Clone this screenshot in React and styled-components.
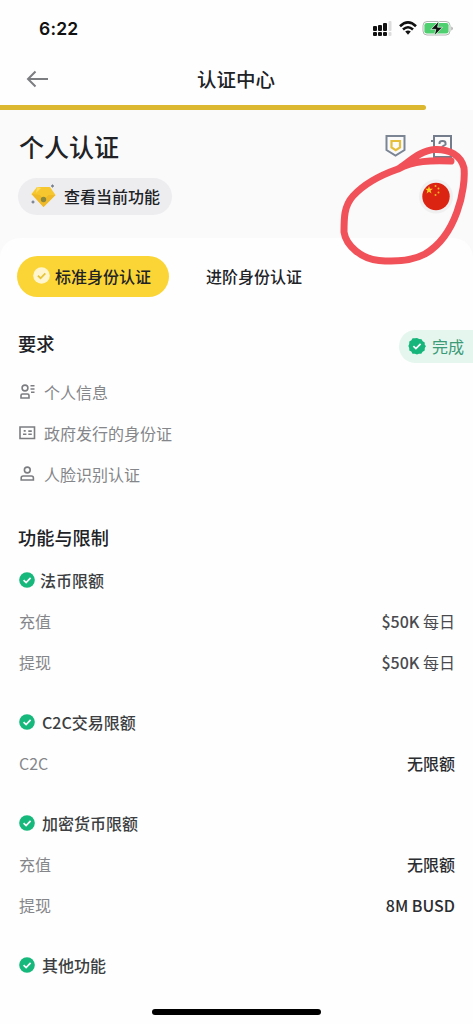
import React from "react";
import styled, { createGlobalStyle } from "styled-components";

const GlobalStyle = createGlobalStyle`
  * {
    box-sizing: border-box;
  }
  body {
    margin: 0;
    background: #fefefe;
  }
`;

const Page = styled.div`
  position: relative;
  display: flex;
  flex-direction: column;
  width: 473px;
  height: 1024px;
  overflow: hidden;
  background: #fefefe;
  color: #202226;
  font-family: "Noto Sans CJK SC", sans-serif;
  font-size: 16px;
  svg {
    display: block;
    flex: none;
  }
`;

const StatusBar = styled.div`
  display: flex;
  justify-content: space-between;
  align-items: center;
  height: 56px;
  padding: 0 20px 0 39px;
`;

const Time = styled.div`
  font-family: Inter, sans-serif;
  font-size: 17.5px;
  font-weight: 600;
  letter-spacing: 0.2px;
  color: #111;
`;

const Navbar = styled.div`
  display: grid;
  grid-template-columns: 60px 1fr 60px;
  align-items: center;
  height: 49px;
  padding: 0 1px 3px 0;
  svg {
    margin-left: 26px;
  }
`;

const NavTitle = styled.div`
  text-align: center;
  font-size: 19.5px;
  font-weight: 500;
  line-height: 46px;
`;

const Track = styled.div`
  height: 5px;
  background: #fefefe;
`;

const Progress = styled.div`
  width: 426px;
  height: 5px;
  border-radius: 0 3px 3px 0;
  background: #dcb730;
`;

const Hero = styled.div`
  height: 148px;
  margin-bottom: -20px;
  padding: 14px 19px 0 18px;
  background: #fafafb;
`;

const HeroRow = styled.div`
  display: flex;
  justify-content: space-between;
  align-items: center;
  height: ${(props) => props.$height}px;
  margin-bottom: ${(props) => props.$gap || 0}px;
`;

const Title = styled.div`
  padding-left: 1px;
  font-size: 25px;
  font-weight: 500;
  line-height: 45px;
`;

const HeroIcons = styled.div`
  display: flex;
  gap: 24px;
  padding-right: 1px;
`;

const Pill = styled.div`
  display: flex;
  align-items: center;
  gap: 7px;
  width: 154px;
  height: 37px;
  padding: 0 0 2px 12px;
  border-radius: 19px;
  background: #ededf0;
  font-weight: 500;
  white-space: nowrap;
`;

const Sheet = styled.div`
  flex: 1;
  padding: 18px 0 0;
  border-radius: 20px 20px 0 0;
  background: #fefefe;
`;

const Tabs = styled.div`
  display: flex;
  align-items: center;
  gap: 37px;
  height: 41px;
  padding-left: 17px;
`;

const Tab = styled.div`
  display: flex;
  align-items: center;
  gap: 5px;
  height: 41px;
  padding: ${(props) => (props.$active ? "0 18px 2px 16px" : "0 0 2px")};
  border-radius: 21px;
  background: ${(props) => (props.$active ? "#fad535" : "transparent")};
  font-weight: 500;
`;

const SectionHead = styled.div`
  display: flex;
  justify-content: space-between;
  height: 33px;
  margin: 33px 0 9px;
  padding-left: 18px;
`;

const SectionTitle = styled.div`
  font-size: 18.2px;
  font-weight: 500;
  line-height: 26px;
`;

const Badge = styled.div`
  display: flex;
  align-items: center;
  gap: 6px;
  width: 74px;
  height: 33px;
  padding: 0 0 1px 9px;
  border-radius: 17px 0 0 17px;
  background: #e4f6ee;
  color: #3c9a76;
  white-space: nowrap;
`;

const Requirement = styled.div`
  display: flex;
  align-items: center;
  gap: 8px;
  height: 41px;
  padding: 0 0 1px 19px;
  color: #85868a;
`;

const LimitsTitle = styled(SectionTitle)`
  margin: 29px 0 9px;
  padding-left: 18px;
`;

const Group = styled.div`
  margin-bottom: 19px;
`;

const GroupHead = styled.div`
  display: flex;
  align-items: center;
  gap: ${(props) => props.$gap}px;
  height: 41px;
  padding-left: 19px;
  color: #3c3e42;
  font-weight: 500;
`;

const LimitRow = styled.div`
  display: flex;
  justify-content: space-between;
  align-items: center;
  height: 41px;
  padding: 0 18px 0 19px;
  color: #85868a;
`;

const Value = styled.span`
  color: ${(props) => (props.$strong ? "#2b2d31" : "#484a4e")};
  font-weight: ${(props) => (props.$strong ? 500 : 400)};
  b {
    font-weight: 500;
  }
`;

const HomeBar = styled.div`
  position: absolute;
  left: 152px;
  bottom: 9px;
  width: 169px;
  height: 6px;
  border-radius: 3px;
  background: #000;
`;

const Scribble = styled.svg`
  position: absolute;
  left: 333px;
  top: 140px;
`;

const StatusIcons = () => (
  <svg width="81" height="20" viewBox="0 0 81 20">
    <g fill="#111">
      <rect x="1" y="8" width="4" height="5" rx="1" />
      <rect x="6" y="7" width="4" height="6" rx="1" />
      <rect x="11" y="5" width="4" height="8" rx="1" />
      <rect x="1" y="14" width="4" height="4" rx="1" />
      <rect x="6" y="14" width="4" height="4" rx="1" />
      <rect x="11" y="14" width="4" height="4" rx="1" />
    </g>
    <rect x="16.5" y="3" width="3" height="10" rx="1" fill="#dcdcdc" />
    <rect x="16.5" y="14" width="3" height="4" rx="1" fill="#dcdcdc" />
    <g fill="none" stroke="#111" strokeWidth="2.6">
      <path d="M28 8.2Q36 0.6 44 8.2" />
      <path d="M31 11.5Q36 7 41 11.5" />
    </g>
    <path d="M33.2 13.6Q36 11.6 38.8 13.6L36 16.8Z" fill="#111" />
    <rect x="51" y="3.5" width="27" height="13.5" rx="4" fill="#fff" stroke="#b0b5b1" />
    <rect x="52.4" y="4.9" width="24.2" height="10.7" rx="2.4" fill="#4fcf70" />
    <path d="M79.3 8.5v4q1.5-.5 1.5-2t-1.5-2Z" fill="#aaa" />
    <path d="M67 3L58.8 11.4h5L62.2 17.8 70.6 9.2h-5Z" fill="#111" stroke="#d9f5df" strokeWidth="0.8" />
  </svg>
);

const BackArrow = () => (
  <svg width="23" height="18" viewBox="0 0 23 18" fill="none" stroke="#7c7d80" strokeWidth="2">
    <path d="M22 9H2M9.5 1.5L2 9l7.5 7.5" />
  </svg>
);

const ShieldIcon = () => (
  <svg width="22" height="24" viewBox="0 0 22 24" fill="none">
    <path d="M1.5 2h18v14L10.5 21.5 1.500 16Z" stroke="#7b8594" strokeWidth="2" />
    <path d="M6.5 7h8.5v6.500l-4.250 2.700L6.500 13.500Z" stroke="#e5bf3b" strokeWidth="2.2" />
  </svg>
);

const HelpBook = () => (
  <svg width="22" height="26" viewBox="0 0 22 26" fill="none" stroke="#747d8c" strokeWidth="2">
    <path d="M3 2h17v21H3ZM0 7h3M0 17h3" />
    <path d="M8.500 10V9q0-2 3-2t3 2v1.500l-3 2v2" />
  </svg>
);

const Gem = () => (
  <svg width="27" height="26" viewBox="0 0 27 26">
    <path d="M7 4h13l5.500 8L13.500 24 1.500 11Z" fill="#f6c72e" />
    <path d="M13.500 24L1.500 11 10 12l3.500 5 5-5 7 0Z" fill="#efb927" />
    <path d="M7 4l4 1L6 10Z" fill="#fddc62" />
    <circle cx="13.500" cy="16.500" r="2.700" fill="#8b883c" />
    <path d="M22.500 1.500l1.500 1.500-1.500 1.500L21 3ZM3 17.500L4.500 19 3 20.500 1.500 19Z" fill="#77808f" stroke="#77808f" strokeWidth="0.5" />
  </svg>
);

const Check = ({ size = 16, color = "#16b87b", tick = "#fff" }) => (
  <svg width={size} height={size} viewBox="0 0 16 16">
    <circle cx="8" cy="8" r="7.8" fill={color} />
    <path d="M4.600 8.200l2.500 2.400 4.500-4.700" fill="none" stroke={tick} strokeWidth="1.7" />
  </svg>
);

const Seal = () => (
  <svg width="18" height="18" viewBox="0 0 18 18">
    <path
      d="M9 .9l2.100 1.200 2.400.1 1.200 2.100 2 1.300.1 2.400L18 9l-1.200 2.100-.1 2.400-2.100 1.200-1.300 2-2.400.1L9 17.500l-2.100-.7-2.400-.1-1.200-2.100-2-1.200-.1-2.400L.4 9l.8-2.100.1-2.400 2.100-1.200 1.200-2 2.400-.1Z"
      fill="#16b57b"
    />
    <path d="M5.400 9.200l2.500 2.400 4.700-4.800" fill="none" stroke="#fff" strokeWidth="1.7" />
  </svg>
);

const Flag = () => (
  <svg width="36" height="38" viewBox="0 0 36 38">
    <circle cx="18" cy="18.5" r="17" fill="#f0f0f1" />
    <circle cx="18" cy="18.5" r="13.7" fill="#dc2413" />
    <path d="M11 8l1 2.700h2.900l-2.300 1.800.9 2.900-2.500-1.700-2.400 1.700.9-2.900-2.400-1.800H10Z" fill="#f8cf25" />
    <g fill="#f3b822">
      <circle cx="17.5" cy="8" r="1" />
      <circle cx="20.5" cy="10.500" r="1" />
      <circle cx="20.5" cy="14.500" r="1" />
      <circle cx="17.5" cy="17" r="1" />
    </g>
  </svg>
);

const lineIcon = {
  width: 17,
  height: 16,
  viewBox: "0 0 17 16",
  fill: "none",
  stroke: "#7c7d81",
  strokeWidth: 1.6,
};

const requirements = [
  {
    name: "个人信息",
    icon: (
      <svg {...lineIcon}>
        <circle cx="6" cy="4" r="2.900" />
        <path d="M2 14v-2.500q0-1.500 1.500-1.500h5q1.500 0 1.500 1.500V14ZM11.500 1.700H15.500M11.500 5H15.500M12 8.300h3.500" />
      </svg>
    ),
  },
  {
    name: "政府发行的身份证",
    icon: (
      <svg {...lineIcon}>
        <path d="M1 2h14.500v11.500H1Z" />
        <path d="M4.700 5.900h2M4 9.300h3.400M9.300 6.100h3.500M9.300 9.300h3.500" />
      </svg>
    ),
  },
  {
    name: "人脸识别认证",
    icon: (
      <svg {...lineIcon}>
        <circle cx="8.300" cy="4" r="2.900" />
        <path d="M2.200 14v-2q0-2 2-2h8.200q2 0 2 2v2Z" />
      </svg>
    ),
  },
];

const groups = [
  {
    name: "法币限额",
    gap: 5,
    rows: [
      { name: "充值", amount: "$50K", value: " 每日" },
      { name: "提现", amount: "$50K", value: " 每日" },
    ],
  },
  { name: "C2C交易限额", gap: 7, rows: [{ name: "C2C", value: "无限额", strong: true }] },
  {
    name: "加密货币限额",
    gap: 7,
    rows: [
      { name: "充值", value: "无限额", strong: true },
      { name: "提现", value: "8M BUSD", strong: true },
    ],
  },
  { name: "其他功能", gap: 7, rows: [] },
];

export default function App() {
  return (
    <Page>
      <GlobalStyle />
      <StatusBar>
        <Time>6:22</Time>
        <StatusIcons />
      </StatusBar>
      <Navbar>
        <BackArrow />
        <NavTitle>认证中心</NavTitle>
      </Navbar>
      <Track>
        <Progress />
      </Track>

      <Hero>
        <HeroRow $height={45} $gap={9}>
          <Title>个人认证</Title>
          <HeroIcons>
            <ShieldIcon />
            <HelpBook />
          </HeroIcons>
        </HeroRow>
        <HeroRow $height={37}>
          <Pill>
            <Gem />
            查看当前功能
          </Pill>
          <Flag />
        </HeroRow>
      </Hero>

      <Sheet>
        <Tabs>
          <Tab $active>
            <Check size={17} color="#fff6cf" tick="#e7c538" />
            标准身份认证
          </Tab>
          <Tab>进阶身份认证</Tab>
        </Tabs>

        <SectionHead>
          <SectionTitle>要求</SectionTitle>
          <Badge>
            <Seal />
            完成
          </Badge>
        </SectionHead>
        {requirements.map((item) => (
          <Requirement key={item.name}>
            {item.icon}
            {item.name}
          </Requirement>
        ))}

        <LimitsTitle>功能与限制</LimitsTitle>
        {groups.map((group) => (
          <Group key={group.name}>
            <GroupHead $gap={group.gap}>
              <Check />
              {group.name}
            </GroupHead>
            {group.rows.map((row) => (
              <LimitRow key={row.name}>
                <span>{row.name}</span>
                <Value $strong={row.strong}>
                  {row.amount && <b>{row.amount}</b>}
                  {row.value}
                </Value>
              </LimitRow>
            ))}
          </Group>
        ))}
      </Sheet>

      <HomeBar />
      <Scribble width="140" height="130" viewBox="333 140 140 130">
        <path
          d="M451 161C430 160 414 161 398 169C378 176 364 184 353 196C344 206 344 218 344 232C346 246 362 259 379 260.500C397 262 412 261 425 254C437 247 449 234 457 212C463 196 465 178 464 168C461 155 449 149 435 149.500C420 150 408 163 398 169"
          fill="none"
          stroke="#f15158"
          strokeWidth="7"
          strokeLinecap="round"
          strokeLinejoin="round"
        />
      </Scribble>
    </Page>
  );
}
